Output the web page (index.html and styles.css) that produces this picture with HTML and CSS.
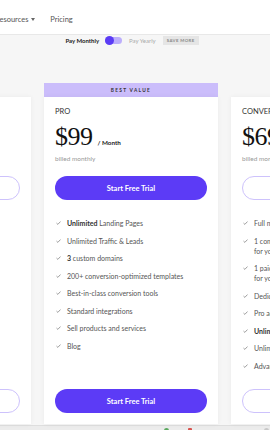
FILE: index.html
```html
<!DOCTYPE html>
<html lang="en">
<head>
    <meta charset="UTF-8">
    <meta name="viewport" content="width=device-width, initial-scale=1.0">
    <title>Pricing</title>
    <link rel="stylesheet" href="styles.css">
</head>
<body>

<header class="topnav">
    <nav class="nav-links">
        <a href="#">Resources <svg class="caret" width="4" height="3" viewBox="0 0 4 3"><path d="M0 0h4L2 3z" fill="#666"/></svg></a>
        <a href="#">Pricing</a>
    </nav>
</header>

<main class="pricing">
    <div class="billing-toggle">
        <span class="billing-active">Pay Monthly</span>
        <span class="switch"><span class="knob"></span></span>
        <span class="billing-muted">Pay Yearly</span>
        <span class="save-badge">SAVE MORE</span>
    </div>

    <div class="plans">
        <section class="plan">
            <div class="plan-body">
                <div class="plan-name">Standard</div>
                <div class="plan-price"><span class="amount">$49</span><span class="period">/ Month</span></div>
                <div class="billed">billed monthly</div>
                <a class="btn btn-outline" href="#">Start Free Trial</a>
                <ul class="features">
                    <li><svg class="check" viewBox="0 0 6 5"><path d="M.5 2.6l1.7 1.6L5.5.7" fill="none" stroke="#777" stroke-width=".9"/></svg><span>1 site</span></li>
                    <li><svg class="check" viewBox="0 0 6 5"><path d="M.5 2.6l1.7 1.6L5.5.7" fill="none" stroke="#777" stroke-width=".9"/></svg><span>Unlimited Traffic</span></li>
                    <li><svg class="check" viewBox="0 0 6 5"><path d="M.5 2.6l1.7 1.6L5.5.7" fill="none" stroke="#777" stroke-width=".9"/></svg><span>Free hosting</span></li>
                </ul>
                <a class="btn btn-outline btn-bottom" href="#">Start Free Trial</a>
            </div>
        </section>

        <section class="plan plan-featured">
            <div class="plan-banner">BEST VALUE</div>
            <div class="plan-body">
                <div class="plan-name">PRO</div>
                <div class="plan-price"><span class="amount">$99</span><span class="period">/ Month</span></div>
                <div class="billed">billed monthly</div>
                <a class="btn btn-primary" href="#">Start Free Trial</a>
                <ul class="features">
                    <li><svg class="check" viewBox="0 0 6 5"><path d="M.5 2.6l1.7 1.6L5.5.7" fill="none" stroke="#777" stroke-width=".9"/></svg><span><b>Unlimited</b> Landing Pages</span></li>
                    <li><svg class="check" viewBox="0 0 6 5"><path d="M.5 2.6l1.7 1.6L5.5.7" fill="none" stroke="#777" stroke-width=".9"/></svg><span>Unlimited Traffic &amp; Leads</span></li>
                    <li><svg class="check" viewBox="0 0 6 5"><path d="M.5 2.6l1.7 1.6L5.5.7" fill="none" stroke="#777" stroke-width=".9"/></svg><span><b>3</b> custom domains</span></li>
                    <li><svg class="check" viewBox="0 0 6 5"><path d="M.5 2.6l1.7 1.6L5.5.7" fill="none" stroke="#777" stroke-width=".9"/></svg><span>200+ conversion-optimized templates</span></li>
                    <li><svg class="check" viewBox="0 0 6 5"><path d="M.5 2.6l1.7 1.6L5.5.7" fill="none" stroke="#777" stroke-width=".9"/></svg><span>Best-in-class conversion tools</span></li>
                    <li><svg class="check" viewBox="0 0 6 5"><path d="M.5 2.6l1.7 1.6L5.5.7" fill="none" stroke="#777" stroke-width=".9"/></svg><span>Standard integrations</span></li>
                    <li><svg class="check" viewBox="0 0 6 5"><path d="M.5 2.6l1.7 1.6L5.5.7" fill="none" stroke="#777" stroke-width=".9"/></svg><span>Sell products and services</span></li>
                    <li><svg class="check" viewBox="0 0 6 5"><path d="M.5 2.6l1.7 1.6L5.5.7" fill="none" stroke="#777" stroke-width=".9"/></svg><span>Blog</span></li>
                </ul>
                <a class="btn btn-primary btn-bottom" href="#">Start Free Trial</a>
            </div>
        </section>

        <section class="plan">
            <div class="plan-body">
                <div class="plan-name">CONVERT</div>
                <div class="plan-price"><span class="amount">$697</span><span class="period">/ Month</span></div>
                <div class="billed">billed monthly</div>
                <a class="btn btn-outline" href="#">Start Free Trial</a>
                <ul class="features">
                    <li><svg class="check" viewBox="0 0 6 5"><path d="M.5 2.6l1.7 1.6L5.5.7" fill="none" stroke="#777" stroke-width=".9"/></svg><span>Full marketing team on demand</span></li>
                    <li><svg class="check" viewBox="0 0 6 5"><path d="M.5 2.6l1.7 1.6L5.5.7" fill="none" stroke="#777" stroke-width=".9"/></svg><span>1 complimentary conversion strategy session for your team</span></li>
                    <li><svg class="check" viewBox="0 0 6 5"><path d="M.5 2.6l1.7 1.6L5.5.7" fill="none" stroke="#777" stroke-width=".9"/></svg><span>1 paid advertising campaign strategy review for your business</span></li>
                    <li><svg class="check" viewBox="0 0 6 5"><path d="M.5 2.6l1.7 1.6L5.5.7" fill="none" stroke="#777" stroke-width=".9"/></svg><span>Dedicated success manager</span></li>
                    <li><svg class="check" viewBox="0 0 6 5"><path d="M.5 2.6l1.7 1.6L5.5.7" fill="none" stroke="#777" stroke-width=".9"/></svg><span>Pro add-ons included</span></li>
                    <li><svg class="check" viewBox="0 0 6 5"><path d="M.5 2.6l1.7 1.6L5.5.7" fill="none" stroke="#777" stroke-width=".9"/></svg><span><b>Unlimited</b> sites</span></li>
                    <li><svg class="check" viewBox="0 0 6 5"><path d="M.5 2.6l1.7 1.6L5.5.7" fill="none" stroke="#777" stroke-width=".9"/></svg><span>Unlimited A/B testing</span></li>
                    <li><svg class="check" viewBox="0 0 6 5"><path d="M.5 2.6l1.7 1.6L5.5.7" fill="none" stroke="#777" stroke-width=".9"/></svg><span>Advanced integrations</span></li>
                </ul>
                <a class="btn btn-outline btn-bottom" href="#">Start Free Trial</a>
            </div>
        </section>
    </div>
</main>

<div class="statusbar">
    <span class="dot dot-green"></span>
    <span class="dot dot-red"></span>
    <span class="dot dot-grey"></span>
</div>

</body>
</html>
```

FILE: styles.css
```css
/* base */
body {
    margin: 0;
    width: 270px;
    height: 430px;
    overflow: hidden;
    font-family: Lato, "Open Sans", sans-serif;
    background-color: #f6f6f6;
    color: #333;
}

a {
    color: inherit;
    text-decoration: none;
}

/* top navigation */
.topnav {
    height: 35px;
    box-sizing: border-box;
    padding-top: 4px;
    display: flex;
    align-items: center;
    background-color: #fff;
    border-bottom: 1px solid #e8e8e8;
}

.nav-links {
    display: flex;
    gap: 15px;
    margin-left: -5px;
    font-size: 7.5px;
    color: #555;
}

.caret {
    margin-left: 1px;
    vertical-align: 1px;
}

/* billing toggle */
.billing-toggle {
    display: flex;
    align-items: center;
    justify-content: center;
    height: 10px;
    padding-right: 6px;
    font-size: 6px;
}

.billing-active {
    font-weight: bold;
    color: #222;
}

.switch {
    position: relative;
    width: 17px;
    height: 7px;
    margin: 0 7px 0 6px;
    border-radius: 4px;
    background-color: #bcaefc;
}

.knob {
    position: absolute;
    left: 0;
    top: -1px;
    width: 9px;
    height: 9px;
    border-radius: 50%;
    background-color: #5b3cf5;
}

.billing-muted {
    color: #aaa;
    margin-right: 7px;
}

.save-badge {
    padding: 2px 4px;
    font-size: 4.3px;
    font-weight: bold;
    letter-spacing: 0.4px;
    color: #888;
    background-color: #e5e5e5;
}

/* plans */
.plans {
    display: flex;
    gap: 13px;
    margin-top: 38px;
    margin-left: -143px;
}

.plan {
    width: 174px;
    flex-shrink: 0;
    display: flex;
    flex-direction: column;
    padding-top: 14px;
}

.plan-featured {
    padding-top: 0;
}

.plan-banner {
    height: 14px;
    line-height: 14px;
    text-align: center;
    font-size: 4.8px;
    font-weight: bold;
    letter-spacing: 1.3px;
    color: #333;
    background-color: #cbbdfb;
}

.plan-body {
    flex: none;
    display: flex;
    flex-direction: column;
    box-sizing: border-box;
    height: 327px;
    padding: 10px 11px 11px;
    background-color: #fff;
    box-shadow: 0 0 5px rgba(0, 0, 0, 0.05);
}

.plan-name {
    font-size: 7.5px;
    line-height: 9px;
    text-transform: uppercase;
    color: #333;
}

.plan-price {
    display: flex;
    align-items: baseline;
    margin-top: 9px;
    white-space: nowrap;
}

.amount {
    font-family: "Liberation Serif", "DejaVu Serif", serif;
    font-size: 26px;
    line-height: 24px;
    letter-spacing: -0.5px;
    color: #111;
}

.period {
    margin-left: 5px;
    font-size: 6.3px;
    font-weight: bold;
    color: #222;
}

.billed {
    margin-top: 6px;
    font-size: 6.5px;
    color: #999;
}

/* buttons */
.btn {
    display: flex;
    align-items: center;
    justify-content: center;
    height: 24px;
    box-sizing: border-box;
    margin-top: 14px;
    border-radius: 12px;
    font-size: 7.5px;
    font-weight: bold;
}

.btn-primary {
    background-color: #5c3bf6;
    color: #fff;
}

.btn-outline {
    border: 1.5px solid #cdc2fc;
    background-color: #fff;
    color: #5c3bf6;
}

.btn-bottom {
    margin-top: auto;
}

/* feature list */
.features {
    list-style: none;
    margin: 18px 0 0;
    padding: 0;
}

.features li {
    display: flex;
    gap: 6px;
    margin-bottom: 7.5px;
    font-size: 7px;
    line-height: 10px;
    color: #555;
}

.features b {
    color: #333;
}

.check {
    flex-shrink: 0;
    width: 5px;
    height: 4px;
    margin: 3px 0 0 1px;
}

/* bottom strip */
.statusbar {
    display: flex;
    align-items: flex-start;
    height: 8px;
    margin-top: 1px;
    background-color: #ececec;
    border-top: 1px solid #dedede;
}

.dot {
    width: 5px;
    height: 5px;
    margin-top: 2px;
    border-radius: 50%;
}

.dot-green {
    margin-left: 164px;
    background-color: #5aa85e;
}

.dot-red {
    margin-left: 19px;
    background-color: #d9534f;
    border-radius: 1px;
    width: 4px;
}

.dot-grey {
    margin-left: 72px;
    background-color: #c8c8c8;
}
```
